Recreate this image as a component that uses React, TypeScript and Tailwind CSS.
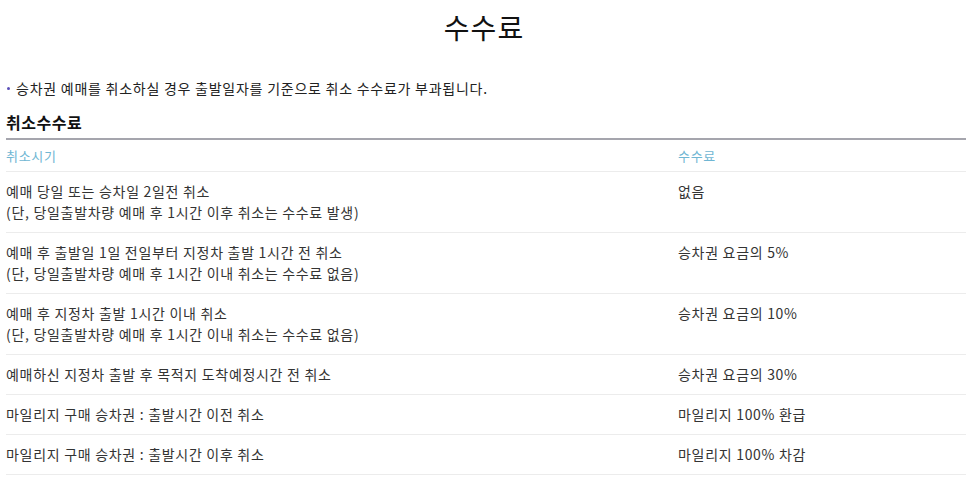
import React from 'react';

type FeeRow = {
  when: string[];
  fee: string;
};

const rows: FeeRow[] = [
  { when: ['예매 당일 또는 승차일 2일전 취소', '(단, 당일출발차량 예매 후 1시간 이후 취소는 수수료 발생)'], fee: '없음' },
  { when: ['예매 후 출발일 1일 전일부터 지정차 출발 1시간 전 취소', '(단, 당일출발차량 예매 후 1시간 이내 취소는 수수료 없음)'], fee: '승차권 요금의 5%' },
  { when: ['예매 후 지정차 출발 1시간 이내 취소', '(단, 당일출발차량 예매 후 1시간 이내 취소는 수수료 없음)'], fee: '승차권 요금의 10%' },
  { when: ['예매하신 지정차 출발 후 목적지 도착예정시간 전 취소'], fee: '승차권 요금의 30%' },
  { when: ['마일리지 구매 승차권 : 출발시간 이전 취소'], fee: '마일리지 100% 환급' },
  { when: ['마일리지 구매 승차권 : 출발시간 이후 취소'], fee: '마일리지 100% 차감' },
];

export default function App() {
  return (
    <div
      className="w-[968px] h-[483px] overflow-hidden bg-white text-[#333]"
      style={{ fontFamily: '"Noto Sans CJK KR", "Noto Sans", sans-serif' }}
    >
      <h1 className="pt-[6px] text-center text-[28px] leading-[42px] tracking-[1px] text-[#111]">수수료</h1>

      <div className="pl-[6px] pr-[2px]">
        <p className="mt-[30px] flex items-center gap-[6px] text-[14px] leading-[20px] tracking-[0.75px] text-[#222]">
          <span className="ml-[1px] inline-block w-[3px] h-[3px] rounded-full bg-[#5b4fb8]" />
          승차권 예매를 취소하실 경우 출발일자를 기준으로 취소 수수료가 부과됩니다.
        </p>

        <h2 className="mt-[13px] text-[16px] font-bold leading-[22px] tracking-[0.5px] text-[#111]">취소수수료</h2>

        <table className="mt-[5px] w-full border-t-2 border-[#a5a5ad] text-[14px] tracking-[0.7px]">
          <thead>
            <tr className="border-b border-[#ececec]">
              <th className="w-[70%] py-[5px] text-left text-[13px] font-normal leading-[21px] text-[#6fb6d3]">취소시기</th>
              <th className="py-[5px] text-left text-[13px] font-normal leading-[21px] text-[#6fb6d3]">수수료</th>
            </tr>
          </thead>
          <tbody>
            {rows.map((row, i) => (
              <tr key={i} className="border-b border-[#ececec] align-top">
                <td className="py-[9px] leading-[21px]">
                  {row.when.map((line, j) => (
                    <div key={j}>{line}</div>
                  ))}
                </td>
                <td className="py-[9px] leading-[21px]">{row.fee}</td>
              </tr>
            ))}
          </tbody>
        </table>
      </div>
    </div>
  );
}
